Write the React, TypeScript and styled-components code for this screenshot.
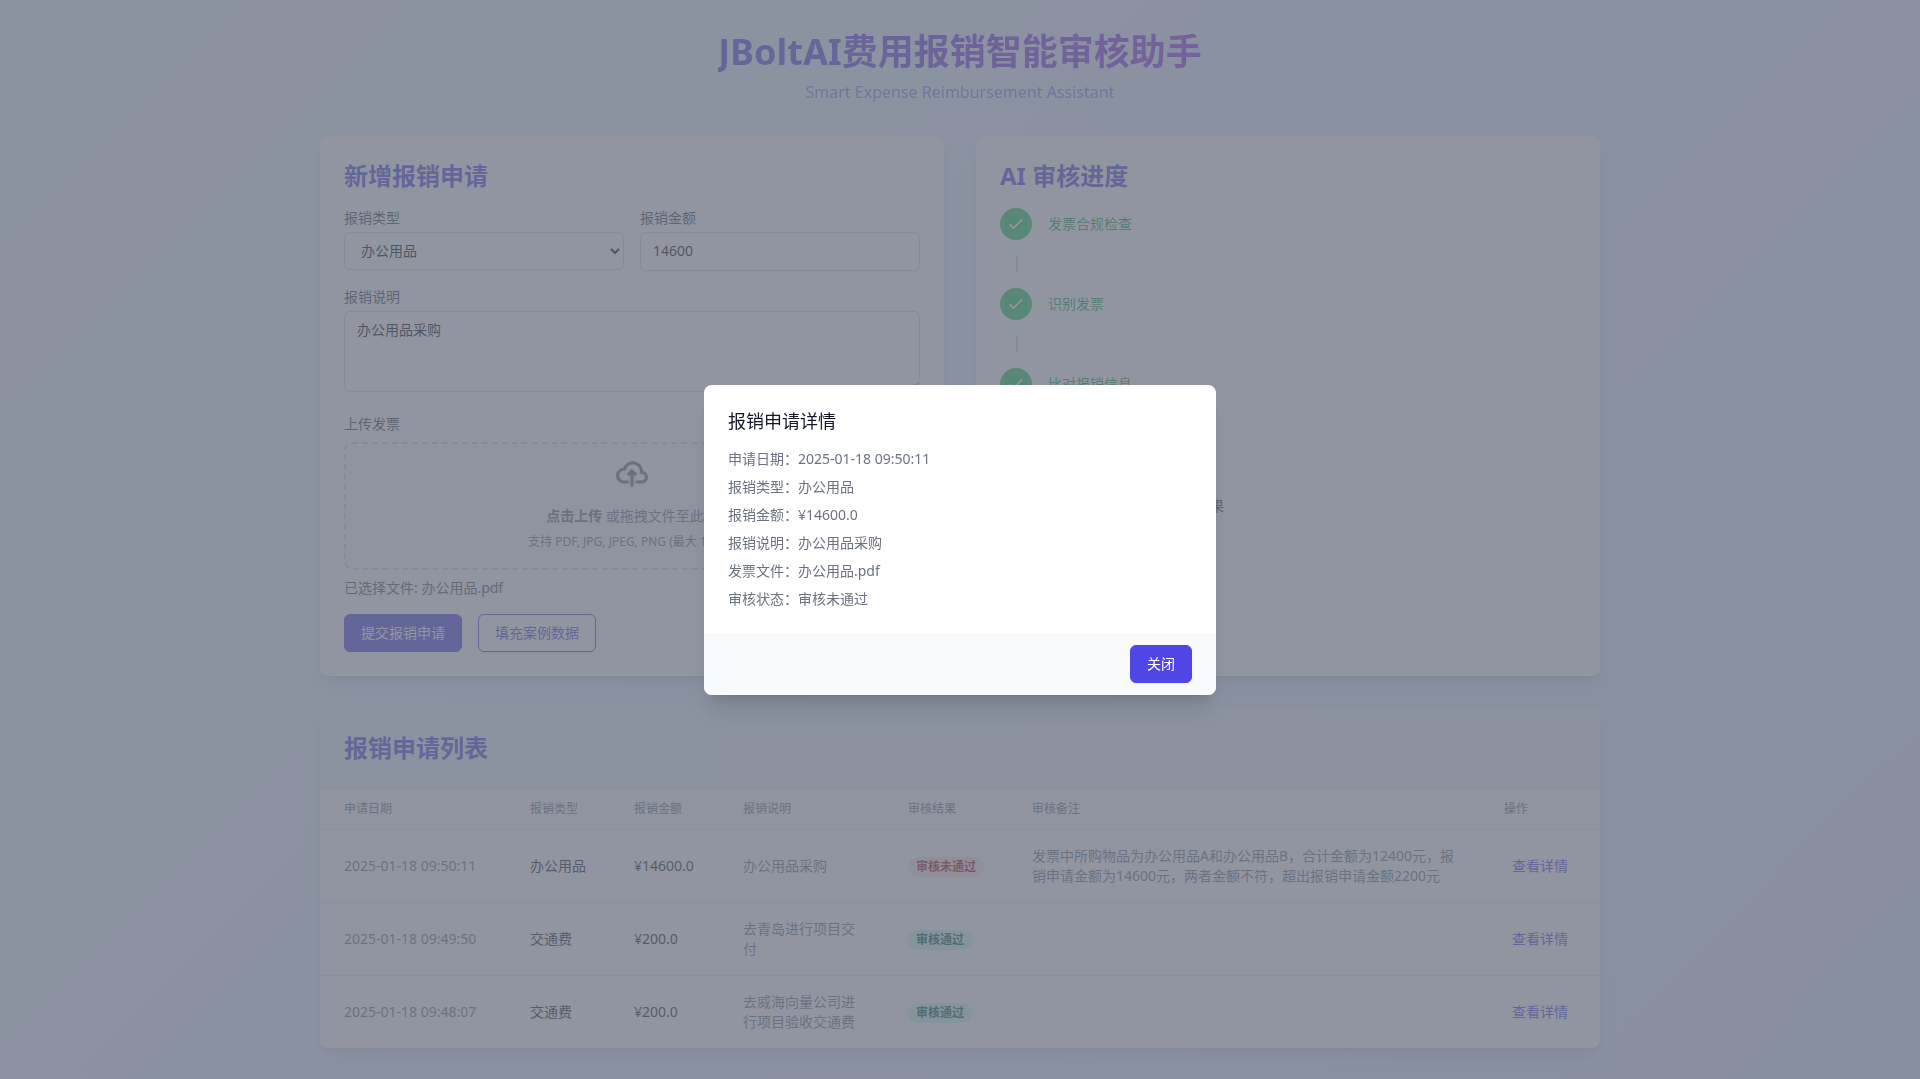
import React from 'react';
import styled, { createGlobalStyle, css } from 'styled-components';

const GlobalStyle = createGlobalStyle`
  *, *::before, *::after { box-sizing: border-box; }
  body {
    margin: 0;
    font-family: "Noto Sans", "Noto Sans CJK SC", sans-serif;
    font-size: 14px;
    line-height: 20px;
    color: #111827;
  }
  h1, h2, h3, p, dl, dd, ol { margin: 0; padding: 0; }
  button, input, select, textarea { font: inherit; color: inherit; }
`;

const Page = styled.div`
  min-height: 100vh;
  padding: 32px 16px 24px;
  background: linear-gradient(135deg, #eff6ff, #e0e7ff);
`;

const Container = styled.div`
  max-width: 1280px;
  margin: 0 auto;
  display: flex;
  flex-direction: column;
  gap: 32px;
`;

const Header = styled.header`
  display: flex;
  flex-direction: column;
  align-items: center;
  gap: 8px;
`;

const Title = styled.h1`
  font-size: 36px;
  line-height: 40px;
  font-weight: 700;
  color: transparent;
  background: linear-gradient(90deg, #4f46e5, #9333ea);
  background-clip: text;
  -webkit-background-clip: text;
`;

const Subtitle = styled.p`
  font-size: 16px;
  line-height: 24px;
  color: #6366f1;
  opacity: 0.8;
`;

const Columns = styled.main`
  display: grid;
  grid-template-columns: 1fr 1fr;
  gap: 32px;
`;

const Card = styled.section<{ $flush?: boolean }>`
  padding: ${(p) => (p.$flush ? '0' : '24px')};
  overflow: hidden;
  border-radius: 8px;
  background: #fff;
  box-shadow: 0 10px 15px -3px rgba(0, 0, 0, 0.1), 0 4px 6px -4px rgba(0, 0, 0, 0.1);
`;

const Heading = styled.h2`
  font-size: 24px;
  line-height: 32px;
  font-weight: 700;
  color: #4f46e5;
`;

const Form = styled.form`
  display: flex;
  flex-direction: column;
  gap: 16px;
  margin-top: 16px;
`;

const FieldRow = styled.div`
  display: grid;
  grid-template-columns: 1fr 1fr;
  gap: 16px;
`;

const Label = styled.label`
  display: block;
  margin-bottom: 4px;
  color: #374151;
`;

const control = css`
  display: block;
  width: 100%;
  border: 1px solid #d1d5db;
  border-radius: 6px;
  background: #fff;
  color: #000;
  box-shadow: 0 1px 2px rgba(0, 0, 0, 0.05);
`;

const Select = styled.select`
  ${control}
  height: 38px;
  padding: 7px 12px 9px;
`;

const Input = styled.input`
  ${control}
  padding: 7px 12px 9px;
  line-height: 21px;
  height: 39px;
`;

const TextArea = styled.textarea`
  ${control}
  padding: 7px 12px 9px;
  line-height: 21px;
  height: 81px;
  resize: vertical;
`;

const UploadField = styled.div`
  padding-top: 6px;
`;

const DropZone = styled.label`
  display: flex;
  flex-direction: column;
  align-items: center;
  justify-content: center;
  height: 128px;
  margin-top: 8px;
  padding-bottom: 4px;
  border: 2px dashed #d1d5db;
  border-radius: 8px;
  background: #f9fafb;
  color: #6b7280;
`;

const UploadIcon = styled.svg`
  width: 32px;
  height: 32px;
  margin-bottom: 16px;
`;

const DropText = styled.span`
  margin-bottom: 8px;
`;

const DropHint = styled.span`
  font-size: 12px;
  line-height: 16px;
`;

const Strong = styled.strong`
  font-weight: 600;
`;

const FileName = styled.p`
  margin-top: 8px;
  color: #4b5563;
`;

const Actions = styled.div`
  display: flex;
  gap: 16px;
`;

const Button = styled.button<{ $outline?: boolean }>`
  padding: 8px 16px;
  border: 1px solid #4f46e5;
  border-radius: 6px;
  background: ${(p) => (p.$outline ? '#fff' : '#4f46e5')};
  color: ${(p) => (p.$outline ? '#4f46e5' : '#fff')};
  box-shadow: 0 1px 2px rgba(0, 0, 0, 0.05);
`;

const Steps = styled.ol`
  list-style: none;
  margin: 16px 0;
`;

const Step = styled.li`
  display: flex;
  align-items: center;
  flex-wrap: wrap;
  column-gap: 16px;
  color: #16a34a;

  &:not(:last-child)::after {
    content: '';
    flex: 0 0 2px;
    height: 16px;
    margin: 16px calc(100% - 18px) 16px 16px;
    background: #d1d5db;
  }
`;

const StepDot = styled.span`
  display: flex;
  align-items: center;
  justify-content: center;
  width: 32px;
  height: 32px;
  border-radius: 50%;
  background: #22c55e;
  color: #fff;
`;

const Result = styled.p`
  color: #374151;
`;

const ListHeader = styled.header`
  padding: 24px;
  border-bottom: 1px solid #e5e7eb;
  background: linear-gradient(90deg, #eff6ff, #eef2ff);
`;

const Table = styled.table`
  width: 100%;
  table-layout: fixed;
  border-collapse: separate;
  border-spacing: 0;
`;

const Col = styled.col<{ $w?: number }>`
  width: ${(p) => (p.$w ? `${p.$w}px` : 'auto')};
`;

const Th = styled.th`
  padding: 12px 24px;
  background: #f9fafb;
  font-size: 12px;
  line-height: 16px;
  font-weight: 400;
  text-align: left;
  color: #6b7280;
`;

const Td = styled.td<{ $dark?: boolean }>`
  height: 73px;
  padding: 16px 24px;
  border-top: 1px solid #e5e7eb;
  color: ${(p) => (p.$dark ? '#111827' : '#6b7280')};
`;

const Badge = styled.span<{ $ok: boolean }>`
  display: inline-block;
  padding: 0 8px;
  border-radius: 10px;
  font-size: 12px;
  line-height: 20px;
  font-weight: 600;
  vertical-align: middle;
  background: ${(p) => (p.$ok ? '#d1fae5' : '#fee2e2')};
  color: ${(p) => (p.$ok ? '#065f46' : '#991b1b')};
`;

const LinkButton = styled.button`
  padding: 0 8px;
  border: 0;
  background: none;
  color: #4f46e5;
`;

const Backdrop = styled.div`
  position: fixed;
  inset: 0;
  display: flex;
  align-items: center;
  justify-content: center;
  background: rgba(107, 114, 128, 0.75);
`;

const Dialog = styled.div`
  width: 512px;
  max-width: calc(100% - 32px);
  overflow: hidden;
  border-radius: 8px;
  background: #fff;
  box-shadow: 0 20px 25px -5px rgba(0, 0, 0, 0.1), 0 8px 10px -6px rgba(0, 0, 0, 0.1);
`;

const DialogBody = styled.div`
  padding: 24px;
`;

const DialogTitle = styled.h3`
  margin-bottom: 16px;
  font-size: 18px;
  line-height: 24px;
  font-weight: 400;
  color: #111827;
`;

const Details = styled.dl`
  display: grid;
  row-gap: 8px;
  color: #6b7280;
`;

const Detail = styled.div`
  display: flex;
`;

const DialogFooter = styled.footer`
  display: flex;
  justify-content: flex-end;
  padding: 12px 24px;
  background: #f9fafb;
`;

const steps = ['发票合规检查', '识别发票', '比对报销信息', '生成审核结果'];

const headers = ['申请日期', '报销类型', '报销金额', '报销说明', '审核结果', '审核备注', '操作'];
const widths = [186, 104, 109, 165, 124, undefined, 120];

const claims = [
  {
    date: '2025-01-18 09:50:11',
    type: '办公用品',
    amount: '¥14600.0',
    note: '办公用品采购',
    ok: false,
    remark:
      '发票中所购物品为办公用品A和办公用品B，合计金额为12400元，报销申请金额为14600元，两者金额不符，超出报销申请金额2200元',
  },
  { date: '2025-01-18 09:49:50', type: '交通费', amount: '¥200.0', note: '去青岛进行项目交付', ok: true, remark: '' },
  { date: '2025-01-18 09:48:07', type: '交通费', amount: '¥200.0', note: '去威海向量公司进行项目验收交通费', ok: true, remark: '' },
];

const details = [
  ['申请日期：', '2025-01-18 09:50:11'],
  ['报销类型：', '办公用品'],
  ['报销金额：', '¥14600.0'],
  ['报销说明：', '办公用品采购'],
  ['发票文件：', '办公用品.pdf'],
  ['审核状态：', '审核未通过'],
];

function CheckIcon() {
  return (
    <svg width="20" height="20" viewBox="0 0 24 24" fill="none" stroke="currentColor" strokeWidth="2" strokeLinecap="round" strokeLinejoin="round" aria-hidden="true">
      <path d="M5 13l4 4L19 7" />
    </svg>
  );
}

function ClaimForm() {
  return (
    <Card>
      <Heading>新增报销申请</Heading>
      <Form onSubmit={(e) => e.preventDefault()}>
        <FieldRow>
          <div>
            <Label htmlFor="type">报销类型</Label>
            <Select id="type" defaultValue="办公用品">
              <option>办公用品</option>
              <option>交通费</option>
            </Select>
          </div>
          <div>
            <Label htmlFor="amount">报销金额</Label>
            <Input id="amount" defaultValue="14600" />
          </div>
        </FieldRow>
        <div>
          <Label htmlFor="note">报销说明</Label>
          <TextArea id="note" defaultValue="办公用品采购" />
        </div>
        <UploadField>
          <Label htmlFor="invoice">上传发票</Label>
          <DropZone htmlFor="invoice">
            <UploadIcon viewBox="0 0 20 16" fill="none" stroke="currentColor" strokeWidth="2" strokeLinecap="round" strokeLinejoin="round" aria-hidden="true">
              <path d="M13 13h3a3 3 0 0 0 0-6h-.025A5.56 5.56 0 0 0 16 6.5 5.5 5.5 0 0 0 5.207 5.021C5.137 5.017 5.071 5 5 5a4 4 0 0 0 0 8h2.167M10 15V6m0 0L8 8m2-2 2 2" />
            </UploadIcon>
            <DropText>
              <Strong>点击上传</Strong> 或拖拽文件至此处
            </DropText>
            <DropHint>支持 PDF, JPG, JPEG, PNG (最大 10MB)</DropHint>
            <input id="invoice" type="file" hidden />
          </DropZone>
          <FileName>已选择文件: 办公用品.pdf</FileName>
        </UploadField>
        <Actions>
          <Button type="submit">提交报销申请</Button>
          <Button type="button" $outline>
            填充案例数据
          </Button>
        </Actions>
      </Form>
    </Card>
  );
}

function Progress() {
  return (
    <Card>
      <Heading>AI 审核进度</Heading>
      <Steps>
        {steps.map((s) => (
          <Step key={s}>
            <StepDot>
              <CheckIcon />
            </StepDot>
            <span>{s}</span>
          </Step>
        ))}
      </Steps>
      <Result>审核完成，请在列表中查看审核结果</Result>
    </Card>
  );
}

function ClaimList() {
  return (
    <Card $flush>
      <ListHeader>
        <Heading>报销申请列表</Heading>
      </ListHeader>
      <Table>
        <colgroup>
          {widths.map((w, i) => (
            <Col key={i} $w={w} />
          ))}
        </colgroup>
        <thead>
          <tr>
            {headers.map((h) => (
              <Th key={h} scope="col">
                {h}
              </Th>
            ))}
          </tr>
        </thead>
        <tbody>
          {claims.map((c) => (
            <tr key={c.date}>
              <Td>{c.date}</Td>
              <Td $dark>{c.type}</Td>
              <Td $dark>{c.amount}</Td>
              <Td>{c.note}</Td>
              <Td>
                <Badge $ok={c.ok}>{c.ok ? '审核通过' : '审核未通过'}</Badge>
              </Td>
              <Td>{c.remark}</Td>
              <Td>
                <LinkButton type="button">查看详情</LinkButton>
              </Td>
            </tr>
          ))}
        </tbody>
      </Table>
    </Card>
  );
}

export default function App() {
  return (
    <>
      <GlobalStyle />
      <Page>
        <Container>
          <Header>
            <Title>JBoltAI费用报销智能审核助手</Title>
            <Subtitle>Smart Expense Reimbursement Assistant</Subtitle>
          </Header>
          <Columns>
            <ClaimForm />
            <Progress />
          </Columns>
          <ClaimList />
        </Container>
      </Page>
      <Backdrop>
        <Dialog role="dialog" aria-modal="true" aria-labelledby="dialog-title">
          <DialogBody>
            <DialogTitle id="dialog-title">报销申请详情</DialogTitle>
            <Details>
              {details.map(([k, v]) => (
                <Detail key={k}>
                  <dt>{k}</dt>
                  <dd>{v}</dd>
                </Detail>
              ))}
            </Details>
          </DialogBody>
          <DialogFooter>
            <Button type="button">关闭</Button>
          </DialogFooter>
        </Dialog>
      </Backdrop>
    </>
  );
}
